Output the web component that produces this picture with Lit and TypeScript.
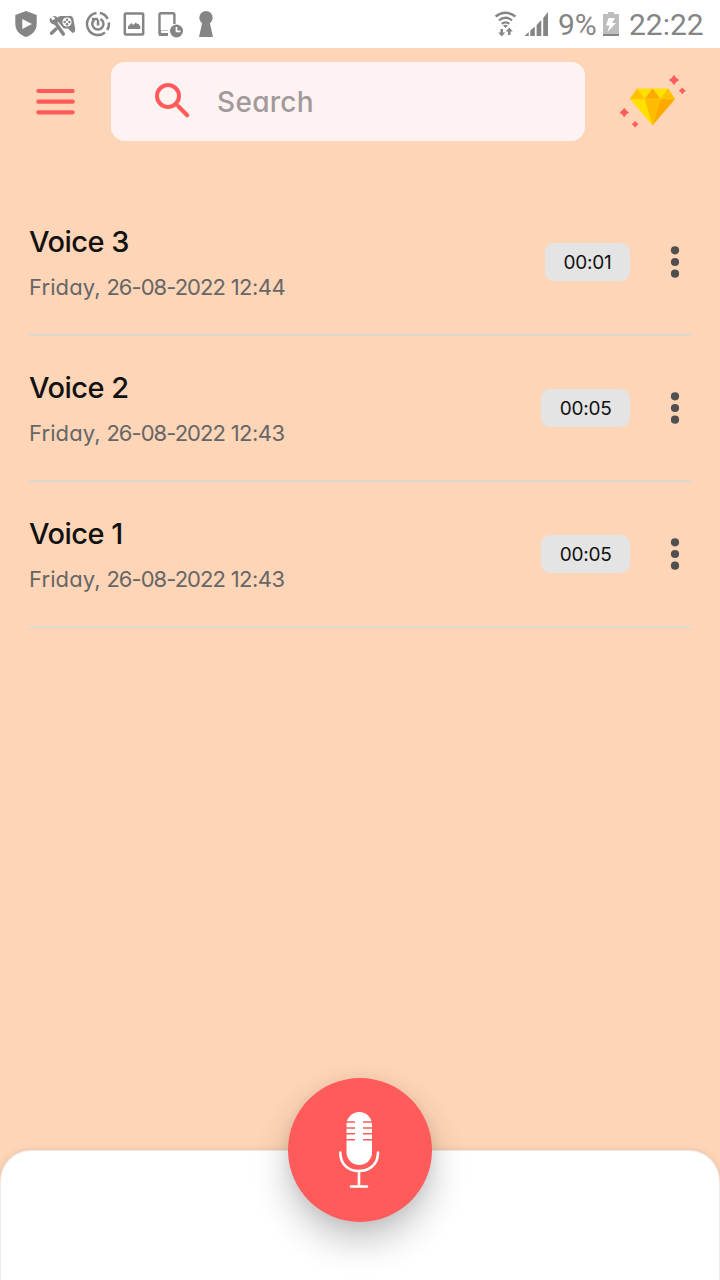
import { LitElement, html, css, svg } from "lit";
import { customElement, property } from "lit/decorators.js";

interface Recording {
  title: string;
  weekday: string;
  day: string;
  clock: string;
  length: string;
}

const recordings: Recording[] = [
  { title: "Voice 3", weekday: "Friday,", day: "26-08-2022", clock: "12:44", length: "00:01" },
  { title: "Voice 2", weekday: "Friday,", day: "26-08-2022", clock: "12:43", length: "00:05" },
  { title: "Voice 1", weekday: "Friday,", day: "26-08-2022", clock: "12:43", length: "00:05" },
];

const spark = (x: number, y: number, r: number) => {
  const k = r * 0.42;
  return svg`<path fill="#ff5b5b" stroke="#ff5b5b" stroke-width="0.8" stroke-linejoin="round"
    d="M${x} ${y - r}L${x + k} ${y - k}L${x + r} ${y}L${x + k} ${y + k}L${x} ${y + r}L${x - k} ${y + k}L${x - r} ${y}L${x - k} ${y - k}Z"/>`;
};

@customElement("status-bar")
class StatusBar extends LitElement {
  static styles = css`
    :host { display: flex; justify-content: space-between; height: 48px; background: #fff; color: #858585; font: 30px/49px Roboto, sans-serif; }
    svg { display: block; flex: none; }
    .right { display: flex; padding-right: 16px; }
    .percent { width: 38px; white-space: nowrap; }
    .clock { width: 75px; white-space: nowrap; }
  `;
  render() {
    return html`
      <svg width="230" height="48" viewBox="0 0 230 48" fill="#858585">
        <path d="M26 11L36.700 15V24C36.700 30.500 32 35 26 37C20 35 15.300 30.500 15.300 24V15Z"/>
        <path fill="#fff" d="M22.300 19V29L32 24Z"/>
        <path d="M57.500 17.500Q59 15.500 62 16H69Q72 15 73.300 18.500L75.200 29Q75.300 33.500 72 32.500L68 28.500H63L58 23Z"/>
        <circle cx="67" cy="22" r="4.600" fill="#fff"/>
        <circle cx="67" cy="19.700" r="1.250"/><circle cx="67" cy="24.300" r="1.250"/><circle cx="64.700" cy="22" r="1.250"/><circle cx="69.300" cy="22" r="1.250"/>
        <path d="M54 21L64 33.500" stroke="#fff" stroke-width="5.500" stroke-linecap="round"/>
        <path d="M54.500 21.500L63.300 34" stroke="#858585" stroke-width="3.600" stroke-linecap="round"/>
        <path d="M51.500 33.200L56 29" stroke="#858585" stroke-width="3.400" stroke-linecap="round"/>
        <path d="M50 17.500L53 20.500L55.300 18.500L52.800 16Q58.300 15.500 58.300 20.500Q57.500 25.500 53 24.300Q48.500 22.500 50 17.500Z"/>
        <g fill="none" stroke="#858585">
          <path stroke-width="2.500" d="M99.800 13.100A11 11 0 0 1 107.700 18.800M108.900 22.500A11 11 0 0 1 107.200 30M105 32.500A11 11 0 1 1 96.500 13.100"/>
          <path stroke-width="2.500" d="M100.500 19A5.600 5.600 0 1 1 94.500 19.500M98 25.500V19.500"/>
        </g>
        <path d="M91.800 17.800H98V20.200H91.800Z"/>
        <rect x="124.800" y="13.500" width="18.400" height="21" rx="1" fill="none" stroke="#858585" stroke-width="2.500"/>
        <path d="M128 29V26.500L131.500 23L133.200 25L135.700 22.500L137.500 24L138.500 23.800L140.300 26.500V29Z"/>
        <path d="M168 34.700H160.700Q159.500 34.700 159.500 33.500V14.500Q159.500 13.200 160.800 13.200H173Q174.400 13.200 174.400 14.500V24" fill="none" stroke="#858585" stroke-width="2.400"/>
        <path d="M159 30.500H168V36H159Z"/><path fill="#fff" d="M161 31H169V33H161ZM168 31H171V37H168Z"/>
        <circle cx="176.500" cy="31" r="6.500"/><path d="M176.500 27V31.300H180.500" fill="none" stroke="#fff" stroke-width="1.700"/>
        <circle cx="206" cy="17.700" r="6.700"/><path d="M202.800 20H209.200L213 37H199Z"/>
      </svg>
      <div class="right">
        <svg width="66" height="48" viewBox="492 0 66 48" fill="#858585">
          <g fill="none" stroke="#858585" stroke-width="2.300">
            <path d="M495.600 16.500Q505.500 9 515.400 16.500M499 20.300Q505.500 15.200 512 20.300M501.700 23.800Q505.500 21 509.300 23.800"/>
          </g>
          <path d="M503 25.500Q505.500 24 508 25.500L505.500 28Z"/>
          <path d="M500.500 29H503V32.500H505.300L501.700 36.500L498.200 32.500H500.500ZM508 35V31.500H505.700L509.300 27.500L512.800 31.500H510.500V35Z"/>
          <path d="M524.500 36L528.700 32V36ZM530.300 36V30.500L534.800 26.500V36ZM536.600 36V25L541.300 20V36ZM543.200 36V18L548 12V36Z"/>
        </svg>
        <span class="percent">9%</span>
        <svg width="33" height="48" viewBox="596 0 33 48">
          <path fill="#bdbdbd" d="M603 14H608V12H614V14H619V36H603Z"/>
          <path fill="#858585" d="M603 34H619V36H603Z"/>
          <path fill="#fff" d="M608.500 18H615L612 23H616L607.500 32L609.500 25.500H606Z"/>
        </svg>
        <span class="clock">22:22</span>
      </div>`;
  }
}

@customElement("search-header")
class SearchHeader extends LitElement {
  static styles = css`
    :host { display: flex; align-items: center; height: 79px; padding: 14px 34px 0 36px; font-family: Inter, "Noto Sans", sans-serif; }
    svg { display: block; flex: none; }
    .menu { margin-right: 35px; }
    .search { flex: 1; height: 79px; border-radius: 14px; background: #fff2f2; display: flex; align-items: center; padding-left: 42px; box-sizing: border-box; }
    .label { margin-left: 26px; font-size: 28px; font-weight: 500; letter-spacing: 0.3px; color: #a09a9a; font-feature-settings: "cv11"; }
    .gem { margin-left: 33px; }
  `;
  render() {
    return html`
      <svg class="menu" width="40" height="40" viewBox="36 82 40 40" stroke="#ff5b5b" stroke-width="4.200" stroke-linecap="round">
        <path d="M38.300 91H72.700M38.300 101.700H72.700M38.300 112.300H72.700"/>
      </svg>
      <div class="search">
        <svg width="38" height="40" viewBox="153 82 38 40" fill="none" stroke="#ff5b5b">
          <circle cx="168" cy="96" r="11" stroke-width="4"/>
          <path d="M178.500 106.500L187.200 115.200" stroke-width="4.200" stroke-linecap="round"/>
          <path d="M175.500 103.500L179 107" stroke-width="2.500"/>
        </svg>
        <span class="label">Search</span>
      </div>
      <svg class="gem" width="68" height="60" viewBox="618 71.500 68 60">
        <path fill="#ffe000" d="M637 88H668L675 98.500L652.500 125L630 98.500Z"/>
        <path fill="#ffc000" d="M637 88L644.700 98.500H630ZM668 88L675 98.500H660.500Z"/>
        <path fill="#ffa800" d="M652.500 88L660.500 98.500H644.700ZM660.500 98.500H675L652.500 125Z"/>
        <path fill="#ffbc00" d="M644.700 98.500H660.500L652.500 125Z"/>
        <path stroke="#ffc81a" stroke-width="0.700" d="M630 98.500H675"/>
        ${spark(674, 79.5, 4.6)}${spark(682.3, 90.3, 3)}${spark(624.2, 112, 4.3)}${spark(635.2, 123.7, 3)}
      </svg>`;
  }
}

@customElement("voice-row")
class VoiceRow extends LitElement {
  @property({ attribute: false }) item!: Recording;
  static styles = css`
    :host { display: flex; align-items: center; height: 146px; box-sizing: border-box; border-bottom: 2px solid #dbd9d3; font-family: Inter, "Noto Sans", sans-serif; font-feature-settings: "cv11"; }
    .text { flex: 1; display: flex; flex-direction: column; gap: 9px; padding-top: 3px; white-space: nowrap; }
    .title { font-size: 29px; line-height: 38px; font-weight: 500; letter-spacing: -0.5px; color: #111; }
    .date { font-size: 22px; line-height: 34px; letter-spacing: -0.5px; color: #666; }
    .weekday { letter-spacing: 0.1px; }
    .day { letter-spacing: -0.96px; }
    .time { height: 38px; padding: 1px 18.500px 0; box-sizing: border-box; border-radius: 9px; background: #e4e4e4; color: #111; font-size: 19px; line-height: 38px; letter-spacing: -0.25px; }
    .dots { display: block; margin: 0 11px 0 40px; }
  `;
  render() {
    const { title, weekday, day, clock, length } = this.item;
    return html`
      <div class="text">
        <span class="title">${title}</span>
        <span class="date"><span class="weekday">${weekday}</span> <span class="day">${day}</span> <span>${clock}</span></span>
      </div>
      <span class="time">${length}</span>
      <svg class="dots" width="10" height="34" viewBox="0 0 10 34" fill="#505050">
        <circle cx="5" cy="5.300" r="4.100"/><circle cx="5" cy="17" r="4.100"/><circle cx="5" cy="28.700" r="4.100"/>
      </svg>`;
  }
}

@customElement("record-bar")
class RecordBar extends LitElement {
  static styles = css`
    :host { display: flex; justify-content: center; height: 129px; margin: 0 1px; border-radius: 30px 30px 0 0; background: #fff; box-shadow: 0 0 0 1px #eee9e6, 0 1px 8px rgba(70, 40, 20, 0.2); }
    .record { width: 144px; height: 144px; margin-top: -73px; border-radius: 50%; background: #ff5b5b; box-shadow: 0 18px 36px rgba(0, 0, 0, 0.24), 0 2px 14px rgba(0, 0, 0, 0.06); }
    svg { display: block; }
  `;
  render() {
    return html`
      <div class="record">
        <svg width="144" height="144" viewBox="288 1078 144 144">
          <rect x="346.500" y="1112" width="25.500" height="53" rx="12.700" fill="#fff"/>
          <path d="M346 1122H355M363 1122H373M346 1128H355M363 1128H373M346 1133.800H355M363 1133.800H373M346 1139.700H355M363 1139.700H373" stroke="#ff5b5b" stroke-width="1.500"/>
          <path d="M340.300 1152.500C340.300 1164 348 1171 359 1171S378 1164 378 1152.500M359 1171V1186M351 1186.500H367" fill="none" stroke="#fff" stroke-width="2.600" stroke-linecap="round"/>
        </svg>
      </div>`;
  }
}

@customElement("app-root")
class AppRoot extends LitElement {
  static styles = css`
    :host { display: flex; flex-direction: column; height: 1280px; width: 720px; background: #ffd5b7; overflow: hidden; }
    .list { flex: 1; padding: 49px 29px 0 29px; }
  `;
  render() {
    return html`
      <status-bar></status-bar>
      <search-header></search-header>
      <div class="list">${recordings.map((r) => html`<voice-row .item=${r}></voice-row>`)}</div>
      <record-bar></record-bar>`;
  }
}
